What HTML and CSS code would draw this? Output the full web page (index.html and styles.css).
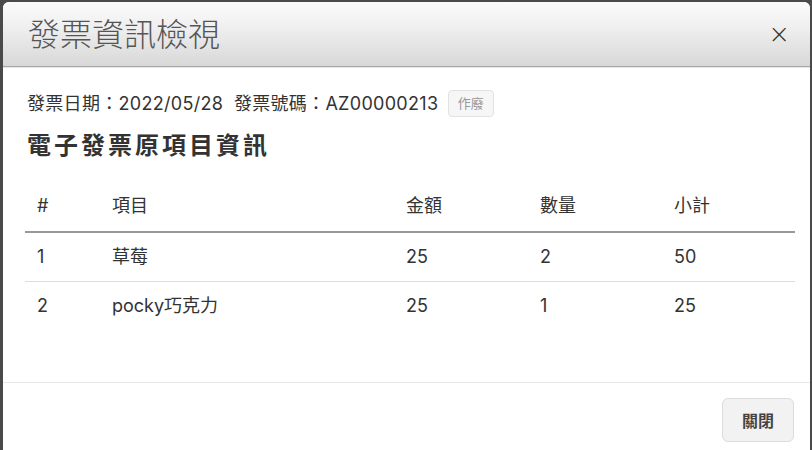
FILE: index.html
```html
<!DOCTYPE html>
<html lang="zh-Hant">
<head>
    <meta charset="UTF-8">
    <title>發票資訊檢視</title>
    <link rel="stylesheet" href="styles.css">
</head>
<body>
    <div class="modal">
        <div class="modal-header">
            <h1 class="modal-title">發票資訊檢視</h1>
            <button class="close" type="button">&times;</button>
        </div>
        <div class="modal-body">
            <p class="invoice-info">發票日期：2022/05/28&nbsp;&nbsp;發票號碼：AZ00000213 <span class="badge">作廢</span></p>
            <h2 class="section-title">電子發票原項目資訊</h2>
            <table class="items">
                <thead>
                    <tr>
                        <th class="col-no">#</th>
                        <th class="col-name">項目</th>
                        <th class="col-num">金額</th>
                        <th class="col-num">數量</th>
                        <th>小計</th>
                    </tr>
                </thead>
                <tbody>
                    <tr>
                        <td>1</td>
                        <td>草莓</td>
                        <td>25</td>
                        <td>2</td>
                        <td>50</td>
                    </tr>
                    <tr>
                        <td>2</td>
                        <td>pocky巧克力</td>
                        <td>25</td>
                        <td>1</td>
                        <td>25</td>
                    </tr>
                </tbody>
            </table>
        </div>
        <div class="modal-footer">
            <button class="btn" type="button">關閉</button>
        </div>
    </div>
</body>
</html>
```

FILE: styles.css
```css
* {
    box-sizing: border-box;
}
body {
    margin: 0;
    background-color: #4a4a4a;
    font-family: Inter, "Noto Sans CJK TC", sans-serif;
    color: #333;
    overflow: hidden;
    height: 450px;
}
.modal {
    margin: 2px 0 0 3px;
    width: 807px;
    height: 448px;
    background-color: #fff;
    border-radius: 6px 6px 0 0;
    display: flex;
    flex-direction: column;
}
.modal-header {
    flex: none;
    height: 65px;
    padding: 0 20px 0 25px;
    display: flex;
    align-items: center;
    justify-content: space-between;
    background: linear-gradient(#fbfbfb, #efefef 40%, #d8d8d8);
    border-bottom: 1px solid #a8a8a8;
    border-radius: 6px 6px 0 0;
    box-shadow: 0 1px 0 #e6e6e6;
}
.modal-title {
    margin: 0 0 4px;
    font-family: "Noto Sans CJK TC", sans-serif;
    font-size: 32px;
    font-weight: 300;
    color: #555;
    line-height: 1;
}
.close {
    border: none;
    background: none;
    padding: 0;
    font-family: "DejaVu Sans", sans-serif;
    font-size: 26px;
    font-weight: 300;
    color: #333;
    line-height: 1;
}
.modal-body {
    flex: 1;
    min-height: 0;
    padding: 0 15px 0 24px;
}
.invoice-info {
    margin: 23px 0 0;
    font-size: 18px;
    letter-spacing: 0.3px;
    line-height: 27px;
    height: 27px;
}
.badge {
    display: inline-block;
    vertical-align: top;
    margin-left: 4px;
    padding: 0 9px;
    font-size: 13px;
    letter-spacing: 0;
    line-height: 25px;
    color: #999;
    background-color: #f6f6f6;
    border: 1px solid #e2e2e2;
    border-radius: 4px;
}
.section-title {
    margin: 14px 0 0;
    font-size: 24px;
    font-weight: 700;
    letter-spacing: 3px;
    line-height: 30px;
    color: #333;
}
.items {
    margin: 19px 0 0 -2px;
    width: 770px;
    border-collapse: collapse;
    font-size: 18px;
}
.items th,
.items td {
    text-align: left;
    font-weight: 400;
    padding: 0 12px;
    height: 49px;
    line-height: 24px;
}
.items thead th {
    height: 52px;
    border-bottom: 2px solid #999;
}
.items tbody tr + tr td {
    border-top: 1px solid #ddd;
}
.col-no {
    width: 75px;
}
.col-name {
    width: 294px;
}
.col-num {
    width: 134px;
}
.modal-footer {
    flex: none;
    height: 68px;
    border-top: 1px solid #e8e8e8;
    display: flex;
    justify-content: flex-end;
    padding: 15px 16px 0 0;
}
.btn {
    width: 72px;
    height: 44px;
    font-family: "Noto Sans CJK TC", sans-serif;
    font-size: 16px;
    font-weight: 700;
    color: #444;
    background-color: #f2f2f2;
    border: 1px solid #dcdcdc;
    border-radius: 6px;
}
```
